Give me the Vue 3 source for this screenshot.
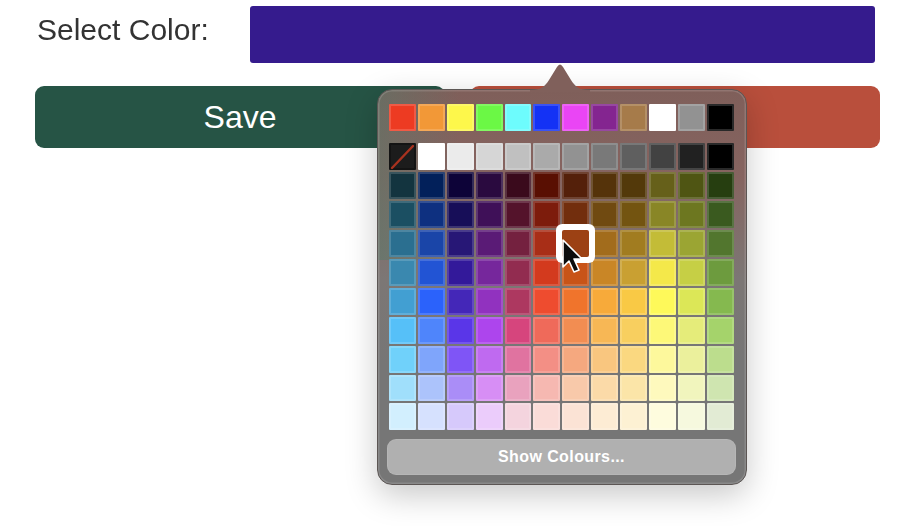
<script setup>
const topRow = ['#ed3b22','#f29837','#fdf74b','#6bf845','#6dfcfd','#1432f5','#ea45f5','#842590','#a67b4a','#ffffff','#929292','#000000']
const rows = [
  ['#000000','#ffffff','#ebebeb','#d6d6d6','#c0c0c0','#aaaaaa','#929292','#797979','#5f5f5f','#424242','#212121','#000000'],
  ['#13343f','#02205a','#0d0338','#2a0a3f','#3a0a1c','#590f02','#54200a','#55330a','#53390a','#66601a','#4f5513','#263e10'],
  ['#1b4f62','#0e3080','#170e58','#3f1058','#54132b','#7d1c0c','#722e0d','#704a11','#735410','#898626','#6d7720','#3a5a1f'],
  ['#2b6f90','#1a45a8','#271776','#5a1b76','#74213f','#a82e17','#9c4114','#a26c1c','#a17c20','#c3bc37','#9ba533','#52762e'],
  ['#3a88af','#2254d4','#33199a','#76279c','#922c50','#d33a1e','#c85418','#c98626','#c9a032','#f4e84a','#c6cf45','#6d9b3e'],
  ['#429fd2','#2b62fb','#4427b8','#9132bf','#ad3860','#ee4c2f','#f0742c','#f7aa3a','#f9c945','#fef95a','#dce757','#85b94f'],
  ['#56c0f8','#4f85fb','#5a36e8','#ad45ed','#d6457d','#ef6a5a','#f28d52','#f7b755','#f8cf5f','#fdf878','#e5ec7a','#a5d36b'],
  ['#70d1fa','#7fa5fb','#7f55f6','#bf6af0','#e073a0','#f38f85','#f5a87f','#f9c67f','#fad880','#fdf89c','#ebf09c','#bcdd8d'],
  ['#a0dffb','#acc3fb','#aa8df7','#d78ef5','#e9a2be','#f6b8b1','#f8c9aa','#fbdaa8','#fbe5a8','#fef9bd','#f1f5bd','#cfe5b0'],
  ['#d2effe','#d6e1fe','#d6c9fb','#ebccfb','#f4d4de','#fadcd8','#fbe3d5','#fdecd4','#fdf1d3','#fefcde','#f6f9de','#e2ebd4']
]
const cells = rows.flatMap((r, ri) => r.map((c, ci) => ({ c, key: ri + '-' + ci, none: ri === 0 && ci === 0, selected: ri === 3 && ci === 6 })))
</script>

<template>
  <div class="page">
    <div class="color-row">
      <span class="label">Select Color:</span>
      <div class="bar"></div>
    </div>
    <div class="buttons">
      <button class="btn save">Save</button>
      <button class="btn cancel"></button>
    </div>

    <div class="popover">
      <div class="grid">
        <div v-for="c in topRow" :key="c" class="cell" :style="{ background: c }"></div>
      </div>
      <div class="grid main">
        <div
          v-for="cell in cells"
          :key="cell.key"
          class="cell"
          :class="{ selected: cell.selected, none: cell.none }"
          :style="{ background: cell.none ? '#1c1c1c' : cell.c }"
        >
          <svg v-if="cell.none" class="slash" viewBox="0 0 27 27"><path d="M3 25 L24 3" stroke="#a8321f" stroke-width="2.4" stroke-linecap="round" /></svg>
        </div>
      </div>
      <div class="show">Show Colours...</div>
    </div>

    <svg class="arrow" viewBox="0 0 60 30" width="60" height="30">
      <path d="M0 28 C12 28 15 24 19 18 L27 5 Q30 0 33 5 L41 18 C45 24 48 28 60 28 L60 30 L0 30 Z" fill="#80605b" />
    </svg>
    <svg class="cursor" viewBox="0 0 24 36" width="24" height="36">
      <path d="M3 2 L3 29 L9 23 L14 34 L19 32 L14 21 L22 21 Z" fill="#0c0c0c" stroke="#fff" stroke-width="1.6" stroke-linejoin="round" />
    </svg>
  </div>
</template>

<style scoped>
.page {
  position: relative;
  width: 910px;
  height: 526px;
  overflow: hidden;
  background: #fff;
  font-family: "Liberation Sans", Arial, sans-serif;
}
.color-row {
  display: flex;
  align-items: center;
  padding: 6px 35px 0 37px;
  height: 57px;
}
.label {
  width: 213px;
  font-size: 30px;
  color: #333;
  position: relative;
  top: -5px;
  white-space: nowrap;
  filter: blur(0.3px);
}
.bar {
  flex: 1;
  height: 57px;
  background: #351b8d;
  border-radius: 3px;
}
.buttons {
  display: flex;
  gap: 25px;
  margin-top: 23px;
  padding: 0 30px 0 35px;
}
.btn {
  flex: 1;
  height: 62px;
  border: 0;
  border-radius: 9px;
  font: 32px "Liberation Sans", Arial, sans-serif;
  color: #fff;
}
.save { background: #265445; }
.cancel { background: #b94f3c; }
.popover {
  position: absolute;
  left: 377px;
  top: 89px;
  width: 370px;
  height: 396px;
  box-sizing: border-box;
  padding: 14px 11px 0;
  border: 1px solid #5c5654;
  border-radius: 15px;
  box-shadow: inset 0 0 0 1.5px rgba(255, 255, 255, 0.14), 0 10px 32px rgba(0, 0, 0, 0.22);
  background:
    linear-gradient(90deg, rgba(90, 120, 105, 0.55) 0, rgba(110, 100, 95, 0) 22%) top / 100% 170px no-repeat,
    linear-gradient(180deg, #7f5f5a 0, #866460 22%, #7c7775 48%, #767676 70%);
}
.grid {
  display: grid;
  grid-template-columns: repeat(12, 26.9px);
  grid-auto-rows: 26.9px;
  gap: 2px;
}
.main { margin-top: 12.5px; }
.cell {
  position: relative;
  box-sizing: border-box;
  border: 2px solid rgba(255, 255, 255, 0.16);
  border-radius: 1px;
  filter: blur(0.4px);
}
.cell.none { border-color: rgba(0, 0, 0, 0.3); }
.cell.selected {
  z-index: 2;
  border-color: transparent;
  border-radius: 2px;
  box-shadow: 0 0 0 6px #fff;
  filter: none;
}
.slash {
  position: absolute;
  left: -2px;
  top: -2px;
  width: 27px;
  height: 27px;
}
.show {
  margin-top: 9px;
  width: 349px;
  height: 36px;
  margin-left: -2px;
  display: flex;
  align-items: center;
  justify-content: center;
  border-radius: 9px;
  background: #b0b0b0;
  color: #fff;
  font-size: 16px;
  font-weight: 700;
  letter-spacing: 0.4px;
  box-shadow: inset 0 0 0 1px rgba(255, 255, 255, 0.08);
}
.arrow {
  position: absolute;
  left: 530px;
  top: 62px;
}
.cursor {
  position: absolute;
  left: 560px;
  top: 238px;
  z-index: 3;
}
</style>
